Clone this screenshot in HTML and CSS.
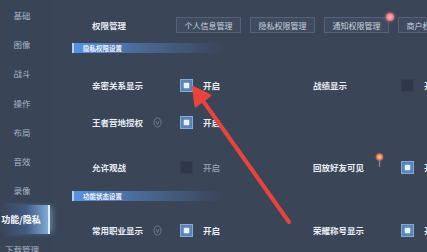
FILE: index.html
```html
<!DOCTYPE html>
<html lang="zh">
<head>
<meta charset="utf-8">
<link rel="stylesheet" href="styles.css">
</head>
<body>
<div class="app">
  <nav class="sidebar">
    <div class="nav-item">基础</div>
    <div class="nav-item">图像</div>
    <div class="nav-item">战斗</div>
    <div class="nav-item">操作</div>
    <div class="nav-item">布局</div>
    <div class="nav-item">音效</div>
    <div class="nav-item">录像</div>
    <div class="nav-item active">功能/隐私</div>
    <div class="nav-item">下载管理</div>
  </nav>
  <main class="main">
    <div class="topbar">
      <div class="title">权限管理</div>
      <div class="tabs">
        <div class="tab">个人信息管理</div>
        <div class="tab">隐私权限管理</div>
        <div class="tab">通知权限管理<span class="badge"></span></div>
        <div class="tab">商户权限管理</div>
      </div>
    </div>

    <div class="section-head">隐私权限设置</div>

    <div class="row r1">
      <div class="cell">
        <span class="label">亲密关系显示</span>
        <span class="check on"></span>
        <span class="state">开启</span>
      </div>
      <div class="cell">
        <span class="label">战绩显示</span>
        <span class="check"></span>
        <span class="state">开启</span>
      </div>
    </div>

    <div class="row r2">
      <div class="cell">
        <span class="label">王者营地授权
          <svg class="ico" width="9" height="11" viewBox="0 0 9 11"><ellipse cx="4.5" cy="5.5" rx="3.6" ry="4.6" fill="none" stroke="#6f7a8d" stroke-width="1"/><path d="M3 4 L4.5 7.5 L6 4" fill="none" stroke="#6f7a8d" stroke-width="1"/></svg>
        </span>
        <span class="check on"></span>
        <span class="state">开启</span>
      </div>
    </div>

    <div class="row r3">
      <div class="cell">
        <span class="label">允许观战</span>
        <span class="check"></span>
        <span class="state dim">开启</span>
      </div>
      <div class="cell">
        <span class="label">回放好友可见
          <svg class="ico pin" width="9" height="28" viewBox="0 0 9 28"><defs><radialGradient id="og"><stop offset="0" stop-color="#ffd0a0"/><stop offset="0.6" stop-color="#f08a50"/><stop offset="1" stop-color="#c8604a" stop-opacity="0.6"/></radialGradient></defs><circle cx="4.5" cy="4" r="4" fill="url(#og)"/><line x1="4.5" y1="7" x2="4.5" y2="14" stroke="#7c8699" stroke-width="1.4"/></svg>
        </span>
        <span class="check on"></span>
        <span class="state">开启</span>
      </div>
    </div>

    <div class="section-head s2">功能状态设置</div>

    <div class="row r4">
      <div class="cell">
        <span class="label">常用职业显示
          <svg class="ico" width="9" height="11" viewBox="0 0 9 11"><ellipse cx="4.5" cy="5.5" rx="3.6" ry="4.6" fill="none" stroke="#6f7a8d" stroke-width="1"/><path d="M3 4 L4.5 7.5 L6 4" fill="none" stroke="#6f7a8d" stroke-width="1"/></svg>
        </span>
        <span class="check on"></span>
        <span class="state">开启</span>
      </div>
      <div class="cell">
        <span class="label">荣耀称号显示</span>
        <span class="check on"></span>
        <span class="state">开启</span>
      </div>
    </div>
  </main>
</div>

<svg class="arrow" width="427" height="252" viewBox="0 0 427 252">
  <line x1="289" y1="222" x2="201" y2="98" stroke="#e8443b" stroke-width="4" stroke-linecap="round"/>
  <polygon points="193,87 195.5,106.5 210.5,95.5" fill="#e8443b" stroke="#e8443b" stroke-width="2" stroke-linejoin="round"/>
</svg>
</body>
</html>
```

FILE: styles.css
```css
* { box-sizing: border-box; margin: 0; padding: 0; }

html, body {
  width: 427px;
  height: 252px;
  overflow: hidden;
}

body {
  position: relative;
  background: #3a4558;
  font-family: "Noto Sans CJK SC", "Noto Sans", sans-serif;
  color: #e8edf5;
}

.app {
  display: flex;
  height: 252px;
}

/* Sidebar */
.sidebar {
  width: 50px;
  flex: none;
  display: flex;
  flex-direction: column;
  background: #394457;
}

.nav-item {
  height: 29.3px;
  flex: none;
  display: flex;
  align-items: center;
  justify-content: center;
  padding-right: 6px;
  font-size: 8.5px;
  color: #aab6c9;
  white-space: nowrap;
}

.nav-item.active {
  color: #ffffff;
  font-weight: bold;
  font-size: 9px;
  padding-right: 6px;
  background: linear-gradient(90deg, rgba(70,130,220,0) 0%, rgba(80,145,235,0.3) 55%, rgba(150,205,255,0.75) 100%);
  border-right: 2px solid #dcefff;
  box-shadow: 4px 0 6px -2px rgba(150,200,255,0.5);
}

/* Main */
.main {
  flex: 1;
  min-width: 0;
  overflow: hidden;
}

.topbar {
  display: flex;
  align-items: center;
  height: 16px;
  margin-top: 17px;
  padding-left: 42px;
}

.title {
  width: 84px;
  flex: none;
  font-size: 8.5px;
  font-weight: bold;
  color: #e6ebf3;
}

.tabs {
  display: flex;
  gap: 9px;
}

.tab {
  position: relative;
  flex: none;
  width: 65px;
  height: 16px;
  display: flex;
  align-items: center;
  justify-content: center;
  border: 1px solid #556178;
  background: #414b5f;
  font-size: 8px;
  color: #c8d1df;
  white-space: nowrap;
}

.badge {
  position: absolute;
  top: -5px;
  right: -6px;
  width: 8px;
  height: 8px;
  border-radius: 50%;
  background: radial-gradient(circle, #ffc2b8 0%, #e8707a 70%, #d05a68 100%);
  box-shadow: 0 0 3px #f07a88;
}

.section-head {
  display: flex;
  align-items: center;
  margin: 10px 0 0 22px;
  width: 150px;
  height: 10px;
  padding-left: 9px;
  font-size: 6.5px;
  font-weight: bold;
  color: #f0f5ff;
  white-space: nowrap;
  border-left: 2px solid #a8d3ff;
  background: linear-gradient(90deg, #5a92e0 0%, rgba(90,140,210,0.55) 40%, rgba(90,140,210,0) 100%);
}

.section-head.s2 { margin-top: 6px; }

.row {
  display: flex;
  align-items: center;
  height: 36px;
  padding-left: 42px;
}

.r1 { margin-top: 14px; }
.r2 { margin-top: 1px; }
.r3 { margin-top: 9px; }
.r4 { margin-top: 11px; }

.cell {
  flex: none;
  width: 221px;
  display: flex;
  align-items: center;
}

.label {
  width: 88px;
  flex: none;
  display: flex;
  align-items: center;
  font-size: 8.5px;
  font-weight: bold;
  color: #e8edf5;
  white-space: nowrap;
}

.ico {
  flex: none;
  margin-left: 10px;
}

.ico.pin { margin-left: 11px; }

.check {
  flex: none;
  width: 13px;
  height: 13px;
  display: flex;
  align-items: center;
  justify-content: center;
  background: #2f3848;
  border: 1px solid #353f51;
}

.check.on {
  background: #5882b4;
  border-color: #84abd8;
}

.check.on::after {
  content: "";
  width: 5px;
  height: 5px;
  background: #e6f1ff;
  box-shadow: 0 0 2px #ffffff;
}

.state {
  margin-left: 10px;
  font-size: 8.5px;
  font-weight: bold;
  color: #e8edf5;
  white-space: nowrap;
}

.state.dim { color: #8b95a7; }

.arrow {
  position: absolute;
  left: 0;
  top: 0;
  pointer-events: none;
}
```
